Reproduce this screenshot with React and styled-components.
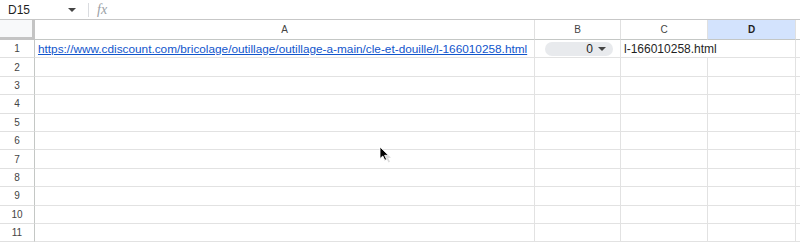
import React from "react";
import styled, { createGlobalStyle } from "styled-components";

const Global = createGlobalStyle`
  html, body { margin: 0; padding: 0; background: #fff; }
  body { font-family: Arial, "Liberation Sans", sans-serif; overflow: hidden; }
  * { box-sizing: border-box; }
`;

const Page = styled.div`
  position: relative;
  width: 800px;
  height: 244px;
  overflow: hidden;
  background: #fff;
`;

const FormulaBar = styled.div`
  display: flex;
  align-items: center;
  height: 20px;
  border-bottom: 1px solid #c7c7c7;
`;

const NameBox = styled.div`
  display: flex;
  align-items: center;
  justify-content: space-between;
  width: 80px;
  padding: 0 4px 0 8px;
  font-size: 12px;
  color: #1f1f1f;
`;

const Caret = styled.span`
  width: 0;
  height: 0;
  border-left: 4px solid transparent;
  border-right: 4px solid transparent;
  border-top: 4px solid #444;
`;

const Separator = styled.div`
  width: 1px;
  height: 14px;
  background: #dadce0;
  margin: 0 8px 0 8px;
`;

const Fx = styled.span`
  font-family: "Liberation Serif", "Times New Roman", serif;
  font-style: italic;
  font-size: 14px;
  color: #9aa0a6;
`;

const Grid = styled.div`
  display: grid;
  grid-template-columns: 35px 500px 86px 87px 88px 1fr;
  grid-template-rows: 20px repeat(11, 18.4px);
`;

const Corner = styled.div`
  border-right: 3px solid #c4c4c4;
  border-bottom: 3px solid #c4c4c4;
  background: #f8f9fa;
`;

const ColHeader = styled.div`
  display: flex;
  align-items: center;
  justify-content: center;
  font-size: 10px;
  color: ${(p) => (p.$active ? "#1f1f1f" : "#444")};
  font-weight: ${(p) => (p.$active ? "bold" : "normal")};
  background: ${(p) => (p.$active ? "#d3e3fd" : "#fff")};
  border-right: 1px solid #e0e0e0;
  border-bottom: 1px solid #c4c7c5;
`;

const RowHeader = styled.div`
  display: flex;
  align-items: center;
  justify-content: center;
  font-size: 10px;
  color: #444;
  border-right: 1px solid #c4c7c5;
  border-bottom: 1px solid #e0e0e0;
`;

const Cell = styled.div`
  display: flex;
  align-items: center;
  padding: 0 3px;
  font-size: 12px;
  color: #1f1f1f;
  white-space: nowrap;
  overflow: ${(p) => (p.$overflow ? "visible" : "hidden")};
  position: ${(p) => (p.$overflow ? "relative" : "static")};
  z-index: ${(p) => (p.$overflow ? 1 : 0)};
  border-right: ${(p) => (p.$noRight ? "none" : "1px solid #e2e2e2")};
  border-bottom: 1px solid #e2e2e2;
`;

const Link = styled.a`
  color: #1155cc;
  text-decoration: underline;
  font-size: 11.8px;
`;

const Chip = styled.div`
  display: flex;
  align-items: center;
  justify-content: flex-end;
  gap: 5px;
  width: 68px;
  height: 14px;
  margin-left: 7px;
  padding-right: 7px;
  border-radius: 7px;
  background: #e8eaed;
  font-size: 12px;
  color: #1f1f1f;
`;

const Cursor = styled.svg`
  position: absolute;
  left: 379px;
  top: 146px;
`;

const cols = ["A", "B", "C", "D"];

export default function App() {
  const rows = Array.from({ length: 11 }, (_, i) => i + 1);
  return (
    <Page>
      <Global />
      <FormulaBar>
        <NameBox>
          D15
          <Caret />
        </NameBox>
        <Separator />
        <Fx>fx</Fx>
      </FormulaBar>
      <Grid>
        <Corner />
        {cols.map((c) => (
          <ColHeader key={c} $active={c === "D"}>
            {c}
          </ColHeader>
        ))}
        <ColHeader />
        {rows.map((r) => (
          <React.Fragment key={r}>
            <RowHeader>{r}</RowHeader>
            {r === 1 ? (
              <>
                <Cell>
                  <Link href="#">
                    https://www.cdiscount.com/bricolage/outillage/outillage-a-main/cle-et-douille/l-166010258.html
                  </Link>
                </Cell>
                <Cell>
                  <Chip>
                    0
                    <Caret />
                  </Chip>
                </Cell>
                <Cell $overflow $noRight>l-166010258.html</Cell>
                <Cell />
                <Cell $noRight />
              </>
            ) : (
              <>
                <Cell />
                <Cell />
                <Cell />
                <Cell />
                <Cell $noRight />
              </>
            )}
          </React.Fragment>
        ))}
      </Grid>
      <Cursor width="14" height="18" viewBox="0 0 14 18">
        <path d="M2.5 2.5 L4 13 L6 11 L8 15 L9.5 14.3 L7.7 10.5 L10.5 10.2 Z" fill="#bbb" opacity="0.5" transform="translate(1.5,1.5)" />
        <path d="M1 1 L1 12.5 L3.8 10 L5.8 14.2 L7.6 13.4 L5.6 9.3 L9.4 9.3 Z" fill="#000" stroke="#fff" strokeWidth="0.8" />
      </Cursor>
    </Page>
  );
}
